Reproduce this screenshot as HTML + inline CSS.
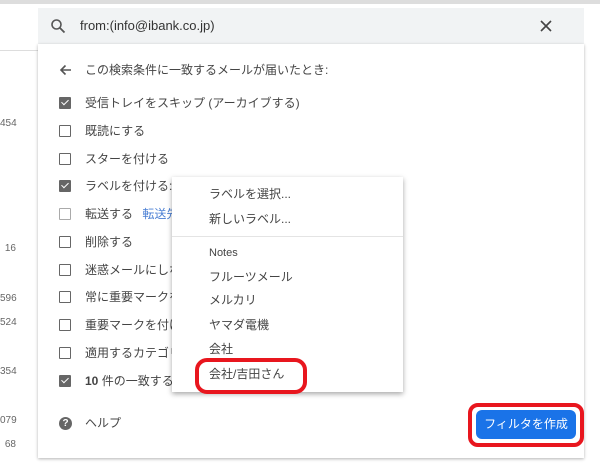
<!DOCTYPE html>
<html><head><meta charset="utf-8"><style>
body{margin:0;width:600px;height:463px;background:#fff;position:relative;overflow:hidden;font-family:"Liberation Sans","Noto Sans CJK JP",sans-serif;color:#333;}
.a{position:absolute;}
.n{position:absolute;left:0;width:16px;text-align:right;font-size:10px;color:#666;}
.cb{position:absolute;left:59px;width:10px;height:10px;border:1.5px solid #666;border-radius:1px;}
.ck{background:#666;}
.ck:after{content:"";position:absolute;left:3px;top:0px;width:3px;height:6px;border:solid #fff;border-width:0 1.5px 1.5px 0;transform:rotate(45deg);}
.t{position:absolute;left:85px;font-size:12px;color:#444;line-height:14px;}
.m{position:absolute;left:209px;font-size:12px;color:#444;line-height:14px;}
</style></head><body>
<div class="a" style="left:0;top:0;width:600px;height:4px;background:#ddd"></div>
<div class="a" style="left:0;top:50px;width:38px;height:1px;background:#ddd"></div>
<div class="n" style="top:118px">454</div>
<div class="n" style="top:243px">16</div>
<div class="n" style="top:293px">596</div>
<div class="n" style="top:317px">524</div>
<div class="n" style="top:366px">354</div>
<div class="n" style="top:415px">079</div>
<div class="n" style="top:439px">68</div>
<div class="a" style="left:38px;top:8px;width:546px;height:36px;background:#f1f3f4"></div>
<svg class="a" style="left:50px;top:18px" width="16" height="16" viewBox="0 0 16 16"><circle cx="6.5" cy="6.5" r="4.5" fill="none" stroke="#555" stroke-width="1.6"/><path d="M10 10l4.5 4.5" stroke="#555" stroke-width="1.8"/></svg>
<div class="a" style="left:80px;top:18px;font-size:13px;color:#333">from:(info@ibank.co.jp)</div>
<svg class="a" style="left:540px;top:20px" width="12" height="12"><path d="M1 1l10 10M11 1L1 11" stroke="#444" stroke-width="1.6"/></svg>
<div class="a" style="left:38px;top:44px;width:546px;height:414px;background:#fff;box-shadow:0 1px 3px rgba(0,0,0,.3)"></div>
<svg class="a" style="left:59px;top:64px" width="13" height="12"><path d="M12 6H2M6.5 1.5L2 6l4.5 4.5" fill="none" stroke="#555" stroke-width="1.6"/></svg>
<div class="t" style="top:63px;left:85px">この検索条件に一致するメールが届いたとき:</div>
<div class="cb ck" style="top:97px"></div><div class="t" style="top:96px">受信トレイをスキップ (アーカイブする)</div>
<div class="cb" style="top:125px"></div><div class="t" style="top:124px">既読にする</div>
<div class="cb" style="top:153px"></div><div class="t" style="top:152px">スターを付ける</div>
<div class="cb ck" style="top:180px"></div><div class="t" style="top:179px">ラベルを付ける:</div>
<div class="cb" style="top:208px;border-color:#aaa"></div><div class="t" style="top:207px">転送する <span style="color:#4a7fd4;margin-left:6px">転送先</span></div>
<div class="cb" style="top:236px"></div><div class="t" style="top:235px">削除する</div>
<div class="cb" style="top:264px"></div><div class="t" style="top:263px">迷惑メールにしない</div>
<div class="cb" style="top:291px"></div><div class="t" style="top:290px">常に重要マークを</div>
<div class="cb" style="top:319px"></div><div class="t" style="top:318px">重要マークを付け</div>
<div class="cb" style="top:347px"></div><div class="t" style="top:346px">適用するカテゴリ</div>
<div class="cb ck" style="top:375px"></div><div class="t" style="top:374px"><b>10</b> 件の一致するス</div>
<div class="a" style="left:59px;top:417px;width:13px;height:13px;border-radius:50%;background:#666;color:#fff;font-size:10px;font-weight:bold;text-align:center;line-height:13px">?</div>
<div class="t" style="top:416px">ヘルプ</div>
<div class="a" style="left:172px;top:177px;width:231px;height:215px;background:#fff;box-shadow:0 2px 5px rgba(0,0,0,.35)"></div>
<div class="m" style="top:187px">ラベルを選択...</div>
<div class="m" style="top:212px">新しいラベル...</div>
<div class="a" style="left:172px;top:236px;width:231px;height:1px;background:#e4e4e4"></div>
<div class="m" style="top:246px;font-size:11px">Notes</div>
<div class="m" style="top:270px">フルーツメール</div>
<div class="m" style="top:293px">メルカリ</div>
<div class="m" style="top:318px">ヤマダ電機</div>
<div class="m" style="top:342px">会社</div>
<div class="m" style="top:367px">会社/吉田さん</div>
<div class="a" style="left:195px;top:358px;width:104px;height:28px;border:4px solid #e8161e;border-radius:12px"></div>
<div class="a" style="left:468px;top:403px;width:108px;height:36px;border:4px solid #e8161e;border-radius:10px"></div>
<div class="a" style="left:476px;top:410px;width:100px;height:29px;background:#1a73e8;border-radius:6px;color:#fff;font-size:12px;text-align:center;line-height:29px">フィルタを作成</div>
</body></html>
